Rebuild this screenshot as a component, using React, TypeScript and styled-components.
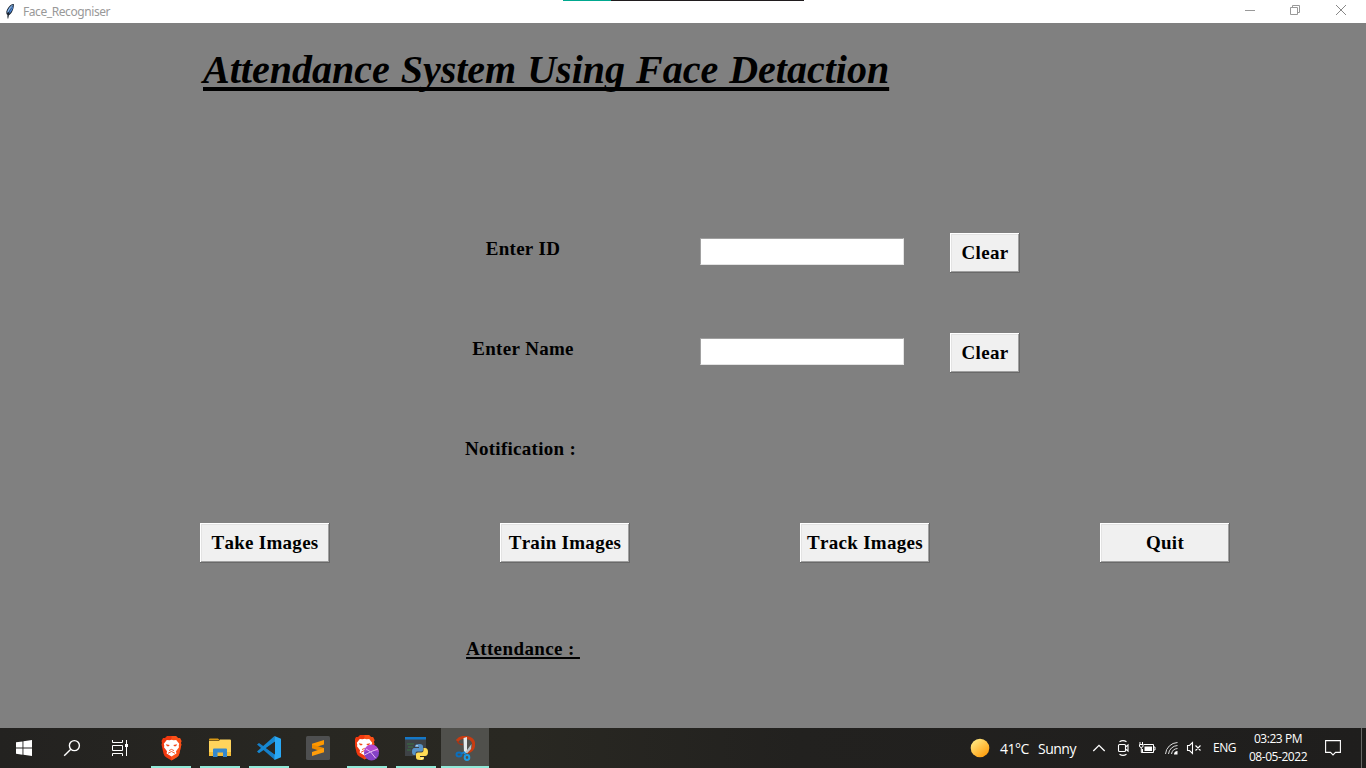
import React from "react";
import styled, { createGlobalStyle } from "styled-components";

const GlobalStyle = createGlobalStyle`
  * { box-sizing: border-box; }
  html, body { margin: 0; padding: 0; }
  body { overflow: hidden; background: #808080; }
  svg { display: block; flex: none; }
`;

const serif = `"Liberation Serif", "Times New Roman", serif`;
const sans = `"Segoe UI", "Open Sans", "Noto Sans", sans-serif`;

const Screen = styled.div`
  width: 1366px;
  height: 768px;
  display: flex;
  flex-direction: column;
  overflow: hidden;
`;

const TitleBar = styled.header`
  position: relative;
  height: 23px;
  flex: none;
  display: flex;
  align-items: center;
  background: #fff;
  font-family: "Noto Sans", ${sans};
`;

const TopStrip = styled.div`
  position: absolute;
  top: 0;
  left: 563px;
  width: 241px;
  height: 1px;
  background: linear-gradient(90deg, #00a88f 48px, #201c1e 48px);
`;

const WindowTitle = styled.span`
  margin-left: 8px;
  font-size: 12px;
  line-height: 23px;
  letter-spacing: -0.42px;
  color: #999;
`;

const WindowControls = styled.div`
  margin: 0 2px 0 auto;
  display: flex;
  height: 23px;
  align-items: center;
`;

const Control = styled.button<{ $width?: number }>`
  width: ${(p) => p.$width ?? 46}px;
  height: 23px;
  padding: 0 0 3px;
  border: 0;
  background: none;
  display: flex;
  align-items: center;
  justify-content: center;
`;

const Content = styled.main`
  flex: 1;
  background: #808080;
  color: #000;
  font-family: ${serif};
  font-weight: bold;
  font-size: 19px;
  line-height: 23px;
  letter-spacing: 0.28px;
  font-kerning: none;
`;

const Heading = styled.h1`
  margin: 0;
  padding: 24px 0 0 203px;
  height: 210px;
  font-size: 40px;
  line-height: 46px;
  font-style: italic;
  letter-spacing: 0;
  word-spacing: 1px;
  white-space: nowrap;

  span {
    text-decoration: underline;
    text-decoration-thickness: 4px;
    text-underline-offset: 4px;
    text-decoration-skip-ink: none;
  }
`;

const FormRow = styled.div<{ $height: number }>`
  height: ${(p) => p.$height}px;
  padding-left: 423px;
  display: flex;
  align-items: flex-start;
`;

const Label = styled.label<{ $underlined?: boolean }>`
  width: 200px;
  margin-top: 4px;
  text-align: center;
  white-space: pre;
  letter-spacing: ${(p) => (p.$underlined ? "0.4px" : "inherit")};

  span {
    text-decoration: ${(p) => (p.$underlined ? "underline" : "none")};
    text-decoration-thickness: 2px;
    text-underline-offset: 2px;
    text-decoration-skip-ink: none;
  }
`;

const Entry = styled.input`
  width: 204px;
  height: 27px;
  margin: 5px 46px 0 77px;
  padding: 0 3px;
  border: 1px solid;
  border-color: #a0a0a0 #e3e3e3 #e3e3e3 #a0a0a0;
  border-radius: 0;
  background: #fff;
  font: inherit;
  outline: 0;
`;

const Button = styled.button<{ $width: number }>`
  width: ${(p) => p.$width}px;
  height: 40px;
  padding: 0 0 2px;
  border: 0;
  border-radius: 0;
  box-shadow:
    inset -1px -1px #696969,
    inset 1px 1px #fff,
    inset -2px -2px #a0a0a0,
    inset 2px 2px #e3e3e3;
  background: #f0f0f0;
  color: #000;
  font: inherit;
  font-kerning: none;
  letter-spacing: inherit;
  white-space: nowrap;
`;

const ActionRow = styled.div`
  height: 110px;
  padding-left: 200px;
  display: flex;
  align-items: flex-start;
  gap: 170px;
`;

const Taskbar = styled.footer`
  height: 40px;
  flex: none;
  display: flex;
  background: linear-gradient(90deg, #232220 0, #282722 300px, #292822 520px, #22211f 800px, #1f1e1d 1366px);
  color: #fff;
  font-family: ${sans};
`;

const SystemButtons = styled.div`
  display: flex;
  width: 147px;
`;

const AppButtons = styled.div`
  display: flex;
  gap: 1px;
`;

const Slot = styled.div<{ $open?: boolean; $active?: boolean }>`
  width: 48px;
  height: 40px;
  display: flex;
  align-items: center;
  justify-content: center;
  background-color: ${(p) => (p.$active ? "#50504c" : "transparent")};
  background-image: ${(p) => (p.$open ? "linear-gradient(#91e9d8, #91e9d8)" : "none")};
  background-repeat: no-repeat;
  background-position: center bottom;
  background-size: ${(p) => (p.$active ? "48px" : "40px")} 2px;
`;

const Tray = styled.div`
  margin-left: auto;
  display: flex;
  align-items: center;
  height: 40px;
`;

const Weather = styled.div`
  display: flex;
  align-items: center;
  width: 122px;
  font-size: 14px;
  line-height: 20px;
  white-space: nowrap;
`;

const WeatherText = styled.span<{ $width: number; $left: number; $spacing: number }>`
  width: ${(p) => p.$width}px;
  margin-left: ${(p) => p.$left}px;
  padding-top: 2px;
  letter-spacing: ${(p) => p.$spacing}px;
`;

const TrayIcons = styled.div`
  display: flex;
  align-items: center;
  gap: 8px;

  svg:first-child {
    margin-right: 2px;
  }
`;

const Language = styled.span`
  width: 24px;
  margin-left: 11px;
  font-size: 12px;
  line-height: 18px;
  letter-spacing: -0.45px;
`;

const Clock = styled.div`
  width: 60px;
  margin: 0 17px 0 11px;
  font-size: 12px;
  line-height: 18px;
  text-align: center;
  letter-spacing: -0.45px;
  white-space: nowrap;
`;

const DesktopEdge = styled.div`
  width: 1px;
  height: 40px;
  margin: 0 4px 0 20px;
  background: #686866;
`;

const FeatherSvg = styled.svg`
  margin-left: 5px;
`;

const Feather = () => (
  <FeatherSvg width="10" height="16" viewBox="0 1 10 16">
    <path d="M8.800.5C5.500 1.200 2 5 1.300 8.800L1.500 11l1 1V15.500H3.300L3.700 12.500C6.800 11 9.300 5.500 8.800.5Z" fill="#1a2430" />
    <path d="M8.200 1.300C5.300 2.800 2.600 6.200 2.100 9.800L3.600 8.900 7.200 4.300Z" fill="#86b8f4" />
    <path d="M8.300 2.700C8.100 6 6 9.300 4 10.800L4.500 8.300Z" fill="#4a86d8" />
    <path d="M7.700 2.500C5 6 3.300 9.500 2.900 14" fill="none" stroke="#1c2630" strokeWidth=".4" />
  </FeatherSvg>
);

const StartIcon = () => (
  <svg width="16" height="16" viewBox="0 0 16 16" fill="#fff">
    <path d="M0 2.300 6.500 1.400V7.500H0ZM7.400 1.300 16 0V7.500H7.400ZM0 8.500H6.500V14.700L0 13.800ZM7.400 8.500H16V16L7.400 14.800Z" />
  </svg>
);

const SearchIcon = () => (
  <svg width="18" height="18" viewBox="0 0 18 18" fill="none" stroke="#fff" strokeWidth="1.400">
    <circle cx="11.400" cy="6.600" r="5" />
    <path d="M7.800 10.200 1.200 16.800" />
  </svg>
);

const TaskViewIcon = () => (
  <svg width="16" height="16" viewBox="0 0 16 16" fill="none" stroke="#fff" strokeWidth="1">
    <path d="M.5 0V2.500H10.500V0M.5 16V13.500H10.500V16M.5 5.500H10.500V10.500H.5ZM14.500 0V16" />
    <path d="M13 4H16V7H13Z" fill="#fff" stroke="none" />
  </svg>
);

const LionShape = () => (
  <>
    <path d="M6 0h9l2 2 2 0 1.500 3-.6 2 .5 1.500-2 9Q18 20 15.500 21.500L10.500 24.500 5.500 21.500Q3 20 2.500 17.500L.5 8.500 1 7 .5 5 2 2l2 0Z" fill="#f0380f" />
    <path d="M10.500 0H15l2 2h2l1.500 3-.6 2 .5 1.500-2 9Q18 20 15.500 21.500L10.500 24.500Z" fill="#ff5a1c" opacity=".75" />
    <path d="m5.800 4 2.700.3 2-.5 2 .5 2.700-.3 3 3.700-.5 2 .3 1.500-3 4 .4 2.300L10.500 20.500 5.600 17.500l.4-2.300-3-4 .3-1.500-.5-2Z" fill="#fff" />
    <path d="m4.800 8.200 3.900.8-.9 1.300L6 10.300ZM16.200 8.200l-3.900.8.900 1.300 1.800 0Z" fill="#f24a1d" />
    <path d="m8 14.600 2.500-1.200 2.500 1.200M7 17.300l3.500-1.800 3.500 1.800" fill="none" stroke="#f24a1d" strokeWidth=".9" />
  </>
);

const BraveIcon = () => (
  <svg width="21" height="25" viewBox="0 0 21 25">
    <LionShape />
  </svg>
);

const BraveTorIcon = () => (
  <svg width="24" height="26" viewBox="1 0 24 26">
    <LionShape />
    <circle cx="17.500" cy="18" r="7.500" fill="#8542c7" />
    <path d="M10 17a7.500 7.500 0 0 1 15 0Q17 14 10 17Z" fill="#b44bd0" />
    <path d="m12 14 4.500 2.800L24 14M16.500 16.800 10.500 20M16.500 16.800 21.500 23" fill="none" stroke="#e8b8f4" strokeWidth="1" />
  </svg>
);

const FolderIcon = () => (
  <svg width="22" height="20" viewBox="0 0 22 20">
    <path d="M0 1.500Q0 .5 1 .5H9l2 2H0Z" fill="#d99a16" />
    <path d="M0 3H10l1-1.500H21Q22 1.500 22 2.500V18H0Z" fill="#ffd45c" />
    <path d="M0 14H22V18H0Z" fill="#f4bd38" />
    <path d="M4 19V11.500Q4 10.500 5 10.500H17Q18 10.500 18 11.500V19H14V14.500H8.500V19Z" fill="#3488ce" />
  </svg>
);

const CodeIcon = () => (
  <svg width="24" height="24" viewBox="0 0 24 24">
    <path d="m0 8.500 2-1.600L18 18.500V24Z" fill="#167fc9" />
    <path d="M0 15.500 17.500 0 18 6 2 17.200Z" fill="#1688d2" />
    <path d="M17.500 0 24 2.700V21.300L17.500 24Z" fill="#29a8f5" />
    <path d="m9 12 9-6.500v13Z" fill="#282722" />
  </svg>
);

const SublimeIcon = () => (
  <svg width="24" height="24" viewBox="0 0 24 24">
    <rect width="24" height="24" rx="1.500" fill="#4e4f50" />
    <path d="M6 7.800 18 4V8.400L6 12.200Z" fill="#ff9800" />
    <path d="M6 8.500 18 12V16.200L6 12.200Z" fill="#ed8a00" />
    <path d="M6 16 18 12V16.200L6 20Z" fill="#ff9d0a" />
  </svg>
);

const PythonIcon = () => (
  <svg width="24" height="24" viewBox="0 0 24 24">
    <path d="M1 1H22V20H1Z" fill="#3e4246" />
    <path d="M1 1H22V3.500H1Z" fill="#1478c8" />
    <path d="M3 8h7M4 11h5M3 14h4" stroke="#397240" strokeWidth="1" />
    <path d="M15.500 8Q19 8 19 10.500V14Q19 15.500 17 15.500H13Q11.500 15.500 11.500 17.500V19H10Q8 19 8 15.500T10.500 12H15V11H11V10Q11 8 15.500 8Z" fill="#5792c7" />
    <path d="M19.500 12H21Q24 12 24 16T21 20H16v1h4v1.500Q20 24 16 24t-4-2.500V18Q12 16.500 14 16.500h3.500q2 0 2-2Z" fill="#ffdc55" />
    <circle cx="13" cy="9.800" r=".7" fill="#fff" />
    <circle cx="18" cy="22.300" r=".7" fill="#fff" />
  </svg>
);

const SnipIcon = () => (
  <svg width="20" height="25" viewBox="0 0 20 25" fill="none">
    <path d="M2 5Q6 0 13 1.800C21 4 20.500 14 12 16.300" stroke="#c83c12" strokeWidth="3" />
    <path d="M2.500 5Q3 8.500 8 8.500" stroke="#a83414" strokeWidth="1.400" />
    <path d="M8.500 2 12 1V16.500L9 18Z" fill="#e4e9eb" />
    <path d="m16.500 8-6 8 1.500 1.500 4-4.500Z" fill="#b9c2c6" />
    <ellipse cx="4" cy="18.500" rx="2.500" ry="2" stroke="#0b6fbe" strokeWidth="2" />
    <ellipse cx="12" cy="21.500" rx="2.300" ry="2.400" stroke="#1d9be4" strokeWidth="2" />
    <path d="m6.500 17.500 3-1.300 1.500 3" stroke="#1684cf" strokeWidth="1.600" />
  </svg>
);

const SunIcon = () => (
  <svg width="20" height="20" viewBox="0 0 20 20">
    <defs>
      <linearGradient id="sun" x1=".15" y1=".1" x2=".8" y2=".95">
        <stop offset="0" stopColor="#ffe780" />
        <stop offset="1" stopColor="#ff9d0c" />
      </linearGradient>
    </defs>
    <circle cx="10" cy="10" r="9.300" fill="url(#sun)" />
  </svg>
);

const ChevronIcon = () => (
  <svg width="14" height="16" viewBox="0 0 14 16" fill="none" stroke="#fff" strokeWidth="1.300">
    <path d="m1.300 11 5.700-5.700L12.700 11" />
  </svg>
);

const MeetIcon = () => (
  <svg width="14" height="16" viewBox="0 0 14 16" fill="none" stroke="#fff" strokeWidth="1.100">
    <rect x="2.500" y="4.500" width="7" height="7" rx="1" />
    <path d="m9.500 7 2.500-2v6L9.500 9M3.500 1.800Q7-.5 10.500 1.800M3.500 14.200Q7 16.500 10.500 14.200" />
  </svg>
);

const BatteryIcon = () => (
  <svg width="18" height="16" viewBox="0 0 18 16" fill="none" stroke="#fff">
    <path d="M5.500 4.500H15.500V12.500H4.500V9M15.500 7H17V10H15.500M2 2V4M4.500 2V4M1.500 4.500H5V6Q5 7.500 3.300 7.500T1.500 6ZM3.300 7.500V12.500H5" />
    <path d="M6.500 6.500H14V11H6.500Z" fill="#fff" stroke="none" />
  </svg>
);

const WifiIcon = () => (
  <svg width="14" height="16" viewBox="-1 0 14 16" fill="none" stroke="#ddd">
    <path d="M.5 14A12.500 12.500 0 0 1 12.500 2.500M3.500 14A9.500 9.500 0 0 1 12.500 5.500M6.500 14A6.500 6.500 0 0 1 12.500 8.500" />
    <path d="M9 14.500a3.500 3.500 0 0 1 3.500-3.500v3.500Z" fill="#fff" stroke="none" />
  </svg>
);

const MutedIcon = () => (
  <svg width="16" height="16" viewBox="0 0 16 16" fill="none" stroke="#fff" strokeWidth="1.100">
    <path d="M1.500 5.500H3.500L6.500 2.500V13.500L3.500 10.500H1.500ZM9.500 5.500l5 5M14.500 5.500l-5 5" />
  </svg>
);

const NotificationIcon = () => (
  <svg width="16" height="16" viewBox="0 0 16 16" fill="none" stroke="#fff" strokeWidth="1.100">
    <path d="M.6.600H15.400V12.400H10.500L8 15 5.500 12.400H.6Z" />
  </svg>
);

const apps = [
  { name: "brave", icon: <BraveIcon />, open: true },
  { name: "files", icon: <FolderIcon />, open: true },
  { name: "code", icon: <CodeIcon />, open: true },
  { name: "sublime", icon: <SublimeIcon /> },
  { name: "private", icon: <BraveTorIcon />, open: true },
  { name: "python", icon: <PythonIcon />, open: true },
  { name: "snip", icon: <SnipIcon />, open: true, active: true },
];

const actions = ["Take Images", "Train Images", "Track Images", "Quit"];

export default function App() {
  return (
    <Screen>
      <GlobalStyle />
      <TitleBar>
        <TopStrip />
        <Feather />
        <WindowTitle>Face_Recogniser</WindowTitle>
        <WindowControls>
          <Control $width={44}>
            <svg width="10" height="10" viewBox="0 0 10 10" stroke="#999">
              <path d="M0 5.500H10" />
            </svg>
          </Control>
          <Control>
            <svg width="10" height="10" viewBox="0 0 10 10" stroke="#999" fill="none">
              <path d="M.5 2.500H7.500V9.500H.5ZM2.500 2V.5H9.500V7.500H8" />
            </svg>
          </Control>
          <Control>
            <svg width="10" height="10" viewBox="0 0 10 10" stroke="#888">
              <path d="M0 0 10 10M10 0 0 10" />
            </svg>
          </Control>
        </WindowControls>
      </TitleBar>

      <Content>
        <Heading>
          <span>Attendance System Using Face Detaction</span>
        </Heading>
        <FormRow $height={100}>
          <Label htmlFor="student-id"><span>Enter ID</span></Label>
          <Entry id="student-id" />
          <Button $width={70}>Clear</Button>
        </FormRow>
        <FormRow $height={100}>
          <Label htmlFor="student-name"><span>Enter Name</span></Label>
          <Entry id="student-name" />
          <Button $width={70}>Clear</Button>
        </FormRow>
        <FormRow $height={90}>
          <Label><span>{"Notification : "}</span></Label>
        </FormRow>
        <ActionRow>
          {actions.map((text) => (
            <Button key={text} $width={130}>{text}</Button>
          ))}
        </ActionRow>
        <FormRow $height={90}>
          <Label $underlined><span>{"Attendance : "}</span></Label>
        </FormRow>
      </Content>

      <Taskbar>
        <SystemButtons>
          <Slot><StartIcon /></Slot>
          <Slot><SearchIcon /></Slot>
          <Slot><TaskViewIcon /></Slot>
        </SystemButtons>
        <AppButtons>
          {apps.map((app) => (
            <Slot key={app.name} $open={app.open} $active={app.active}>{app.icon}</Slot>
          ))}
        </AppButtons>
        <Tray>
          <Weather>
            <SunIcon />
            <WeatherText $width={30} $left={10} $spacing={-0.5}>41°C</WeatherText>
            <WeatherText $width={40} $left={8} $spacing={-0.5}>Sunny</WeatherText>
          </Weather>
          <TrayIcons>
            <ChevronIcon />
            <MeetIcon />
            <BatteryIcon />
            <WifiIcon />
            <MutedIcon />
          </TrayIcons>
          <Language>ENG</Language>
          <Clock>
            <div>03:23 PM</div>
            <div>08-05-2022</div>
          </Clock>
          <NotificationIcon />
          <DesktopEdge />
        </Tray>
      </Taskbar>
    </Screen>
  );
}
